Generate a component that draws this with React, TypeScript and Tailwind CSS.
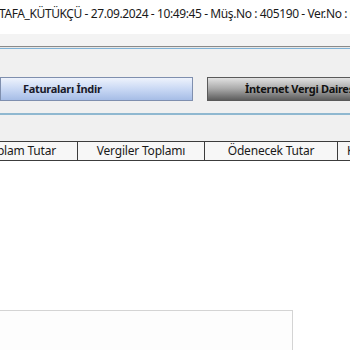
import React from "react";

export default function App() {
  return (
    <div
      className="w-[350px] h-[350px] overflow-hidden bg-[#f0f0f0] flex flex-col"
      style={{ fontFamily: '"Noto Sans", "Open Sans", sans-serif' }}
    >
      <div className="h-[34px] shrink-0 bg-white flex items-start pt-[5px] overflow-hidden">
        <span className="whitespace-nowrap text-[12px] leading-[18px] tracking-[-0.4px] text-[#1a1a1a] -ml-[1px]">
          TAFA_KÜTÜKÇÜ - 27.09.2024 - 10:49:45 - Müş.No : 405190 - Ver.No : 0
        </span>
      </div>
      <div className="h-[12px] shrink-0 bg-[#f3f3f3]" />
      <div className="h-[1px] shrink-0 bg-[#8a8a8a]" />
      <div className="h-[1px] shrink-0 bg-[#e8e8e8]" />
      <div className="h-[1px] shrink-0 bg-[#7fb2d6]" />
      <div className="h-[28px] shrink-0" />
      <div className="h-[24px] shrink-0 flex overflow-hidden">
        <div className="w-[193px] shrink-0 border border-[#7f8fae] bg-gradient-to-b from-[#eef3fc] via-[#c9d8f4] to-[#a6bde6] flex items-center pl-[22px]">
          <span className="text-[11px] font-bold tracking-[-0.3px] text-[#1a1a2a] whitespace-nowrap">Faturaları İndir</span>
        </div>
        <div className="w-[14px] shrink-0" />
        <div className="w-[200px] shrink-0 border border-[#5a5a5a] bg-gradient-to-b from-[#e2e2e2] via-[#a8a8a8] to-[#5e5e5e] flex items-center pl-[37px]">
          <span className="text-[11px] font-bold tracking-[-0.3px] text-[#111] whitespace-nowrap">İnternet Vergi Dairesi</span>
        </div>
      </div>
      <div className="h-[12px] shrink-0" />
      <div className="h-[2px] shrink-0 bg-[#8fb8d0]" />
      <div className="h-[26px] shrink-0" />
      <div className="flex-1 bg-white flex flex-col">
        <div className="h-[20px] shrink-0 flex border-y border-[#3c3c3c] bg-[#f7f7f7] text-[12px] tracking-[-0.2px] text-[#1a1a1a] whitespace-nowrap overflow-hidden">
          <div className="w-[78px] shrink-0 border-r border-[#3c3c3c] flex items-center justify-end pr-[21px] overflow-hidden">
            <span className="shrink-0 w-[90px] text-right">Toplam Tutar</span>
          </div>
          <div className="w-[127px] shrink-0 border-r border-[#3c3c3c] flex items-center justify-center">
            Vergiler Toplamı
          </div>
          <div className="w-[133px] shrink-0 border-r border-[#3c3c3c] flex items-center justify-center">
            Ödenecek Tutar
          </div>
          <div className="w-[80px] shrink-0 flex items-center pl-[9px]">KDV</div>
        </div>
        <div className="h-[149px] shrink-0" />
        <div className="flex-1 flex">
          <div className="w-[293px] shrink-0 border-t border-r border-[#d4d4d4] bg-[#fdfdfd]" />
        </div>
      </div>
    </div>
  );
}
